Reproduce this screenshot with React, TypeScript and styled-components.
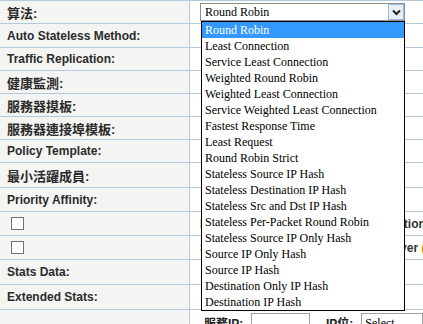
import styled, { createGlobalStyle } from 'styled-components';

const options = [
    'Round Robin',
    'Least Connection',
    'Service Least Connection',
    'Weighted Round Robin',
    'Weighted Least Connection',
    'Service Weighted Least Connection',
    'Fastest Response Time',
    'Least Request',
    'Round Robin Strict',
    'Stateless Source IP Hash',
    'Stateless Destination IP Hash',
    'Stateless Src and Dst IP Hash',
    'Stateless Per-Packet Round Robin',
    'Stateless Source IP Only Hash',
    'Source IP Only Hash',
    'Source IP Hash',
    'Destination Only IP Hash',
    'Destination IP Hash',
];

const rows = [
    { label: '算法:', h: 23, select: true },
    { label: 'Auto Stateless Method:', h: 24 },
    { label: 'Traffic Replication:', h: 23 },
    { label: '健康監測:', h: 23 },
    { label: '服務器摸板:', h: 23 },
    { label: '服務器連接埠模板:', h: 23 },
    { label: 'Policy Template:', h: 23 },
    { label: '最小活躍成員:', h: 25 },
    { label: 'Priority Affinity:', h: 24 },
    { check: true, h: 24, right: 'Enable Priority Affinity Action Selection' },
    { check: true, h: 24, right: 'Send Resets To All Unavailable Server', orange: ' (' },
    { label: 'Stats Data:', h: 25 },
    { label: 'Extended Stats:', h: 25 },
];

const isCjk = (s?: string) => !!s && /[\u4e00-\u9fff]/.test(s);

const Chevron = () => (
    <svg width="9" height="7" viewBox="0 0 9 7">
        <path d="M1 1.5 L4.5 5 L8 1.5" fill="none" stroke="#222" strokeWidth="2" />
    </svg>
);

const App = () => {
    return (
        <>
            <GlobalStyle />
            <Table>
                {rows.map((r, i) => (
                    <Row key={i} h={r.h}>
                        <LabelCell>
                            {r.check ? <Checkbox /> : <Label cjk={isCjk(r.label)}>{r.label}</Label>}
                        </LabelCell>
                        <ValueCell>
                            {r.select && (
                                <SelectWrap>
                                    <SelectBox>
                                        <SelectText>Round Robin</SelectText>
                                        <ArrowButton><Chevron /></ArrowButton>
                                    </SelectBox>
                                    <OptionList>
                                        {options.map((o, j) => (
                                            <Option key={o} active={j === 0}>{o}</Option>
                                        ))}
                                    </OptionList>
                                </SelectWrap>
                            )}
                            {r.right && (
                                <RightText>
                                    {r.right}
                                    {r.orange && <Orange>{r.orange}</Orange>}
                                </RightText>
                            )}
                        </ValueCell>
                    </Row>
                ))}
                <Row h={26}>
                    <LabelCell />
                    <ValueCell>
                        <FieldLabel>服務IP:</FieldLabel>
                        <Input />
                        <FieldLabel>IP位:</FieldLabel>
                        <SmallSelect>Select</SmallSelect>
                    </ValueCell>
                </Row>
            </Table>
        </>
    );
};

export default App;

const GlobalStyle = createGlobalStyle`
    html, body {
        margin: 0;
        padding: 0;
        background: #ffffff;
        overflow: hidden;
    }
    body {
        font-family: "Liberation Sans", Arial, sans-serif;
    }
`;

const Table = styled.div`
    width: 423px;
    border-top: 1px solid #b4c9da;
    display: flex;
    flex-direction: column;
`;

const Row = styled.div<{ h: number }>`
    display: grid;
    grid-template-columns: 190px 1fr;
    height: ${p => p.h}px;
    box-sizing: border-box;
    border-bottom: 1px solid #b4c9da;
`;

const LabelCell = styled.div`
    background: #f4f4f2;
    border-right: 1px solid #b4c9da;
    display: flex;
    align-items: center;
    padding-left: 7px;
    overflow: hidden;
`;

const Label = styled.span<{ cjk: boolean }>`
    font-family: "Liberation Sans", Arial, "Noto Sans CJK TC", sans-serif;
    font-weight: bold;
    font-size: ${p => (p.cjk ? 13 : 12)}px;
    color: #2b2b2b;
    white-space: nowrap;
`;

const Checkbox = styled.span`
    display: block;
    width: 11px;
    height: 11px;
    margin-left: 4px;
    border: 1px solid #707070;
    background: #ffffff;
`;

const ValueCell = styled.div`
    display: flex;
    align-items: center;
    padding-left: 10px;
    white-space: nowrap;
    overflow: visible;
    min-width: 0;
`;

const SelectWrap = styled.div`
    position: relative;
    z-index: 2;
`;

const SelectBox = styled.div`
    width: 205px;
    height: 18px;
    box-sizing: border-box;
    border: 1px solid #8e8f8f;
    background: #ffffff;
    display: flex;
    align-items: stretch;
`;

const SelectText = styled.span`
    flex: 1;
    font-family: "Liberation Serif", "Times New Roman", serif;
    font-size: 12px;
    color: #000000;
    line-height: 16px;
    padding-left: 4px;
`;

const ArrowButton = styled.span`
    width: 16px;
    box-sizing: border-box;
    border: 1px solid #9fbddb;
    background: #e6eef6;
    display: flex;
    align-items: center;
    justify-content: center;
`;

const OptionList = styled.div`
    position: absolute;
    top: 18px;
    left: 1px;
    width: 204px;
    box-sizing: border-box;
    border: 1px solid #000000;
    background: #ffffff;
`;

const Option = styled.div<{ active: boolean }>`
    height: 16px;
    line-height: 16px;
    padding-left: 3px;
    font-family: "Liberation Serif", "Times New Roman", serif;
    font-size: 12px;
    color: ${p => (p.active ? '#ffffff' : '#000000')};
    background: ${p => (p.active ? '#3399ff' : 'transparent')};
    white-space: nowrap;
`;

const RightText = styled.span`
    font-weight: bold;
    font-size: 12px;
    color: #333333;
`;

const Orange = styled.span`
    color: #e08a00;
`;

const FieldLabel = styled.span`
    font-family: "Liberation Sans", Arial, "Noto Sans CJK TC", sans-serif;
    font-weight: bold;
    font-size: 12px;
    color: #222222;
    margin-right: 8px;
    margin-left: 4px;
`;

const Input = styled.span`
    display: block;
    width: 70px;
    height: 18px;
    border: 1px solid #a0a0a0;
    margin-right: 12px;
`;

const SmallSelect = styled.span`
    display: block;
    width: 70px;
    height: 18px;
    line-height: 18px;
    border: 1px solid #a0a0a0;
    padding-left: 3px;
    font-family: "Liberation Serif", serif;
    font-size: 12px;
`;
